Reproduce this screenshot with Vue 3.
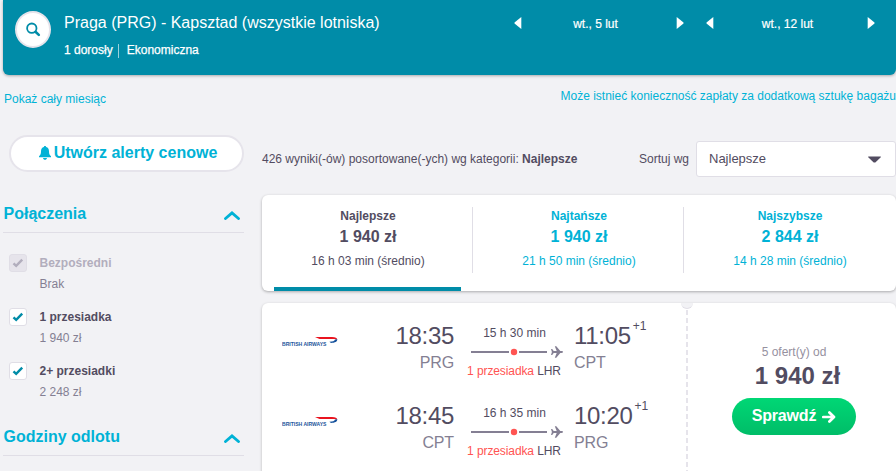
<script setup>
const filters = [
  { name: 'Bezpośredni', note: 'Brak', disabled: true },
  { name: '1 przesiadka', note: '1 940 zł' },
  { name: '2+ przesiadki', note: '2 248 zł' },
]
const tabs = [
  { name: 'Najlepsze', price: '1 940 zł', time: '16 h 03 min (średnio)', active: true },
  { name: 'Najtańsze', price: '1 940 zł', time: '21 h 50 min (średnio)' },
  { name: 'Najszybsze', price: '2 844 zł', time: '14 h 28 min (średnio)' },
]
const legs = [
  { dep: '18:35', from: 'PRG', time: '15 h 30 min', arr: '11:05', to: 'CPT' },
  { dep: '18:45', from: 'CPT', time: '16 h 35 min', arr: '10:20', to: 'PRG' },
]
const days = ['wt., 5 lut', 'wt., 12 lut']
</script>

<template>
  <div class="page">
    <header class="header">
      <button class="search" aria-label="Szukaj">
        <svg width="16" height="16" viewBox="0 0 16 16"><circle cx="6.800" cy="6.200" r="4.700" fill="none" stroke="#008ca8" stroke-width="1.800" /><path d="M10.500 9.800l3.300 3.100" stroke="#008ca8" stroke-width="2.600" stroke-linecap="round" /></svg>
      </button>
      <div class="trip">
        <h1>Praga (PRG) - Kapsztad (wszystkie lotniska)</h1>
        <div class="meta"><span class="adults">1 dorosły</span><i></i><span class="cabin">Ekonomiczna</span></div>
      </div>
      <div class="days">
        <div v-for="d in days" :key="d" class="day">
          <svg width="8" height="12" viewBox="0 0 8 12"><path d="M7.300 0v12L.5 6.600V5.400z" fill="#fff" /></svg>
          <span>{{ d }}</span>
          <svg width="8" height="12" viewBox="0 0 8 12"><path d="M.7 0v12l6.800-5.400V5.400z" fill="#fff" /></svg>
        </div>
      </div>
    </header>
    <div class="links">
      <a class="month">Pokaż cały miesiąc</a>
      <a class="bag">Może istnieć konieczność zapłaty za dodatkową sztukę bagażu</a>
    </div>
    <div class="body">
      <aside>
        <button class="alert">
          <svg width="12" height="14" viewBox="0 0 12 14"><path d="M6 0c.8 0 1.100.5 1.100 1.100C9.100 1.600 10 3.200 10 5.200c0 2.800.5 3.700 2 5.100v.9H0v-.9c1.500-1.400 2-2.300 2-5.100 0-2 .9-3.600 2.900-4.100C4.900.5 5.200 0 6 0zM4 12h4c-.2 1.200-.9 1.800-2 1.800S4.200 13.200 4 12z" fill="#00b2d6" /></svg>
          <span>Utwórz alerty cenowe</span>
        </button>
        <div class="section first">
          <h2>Połączenia</h2>
          <svg width="16" height="9" viewBox="0 0 16 9"><path d="M1.500 7.500L8 2l6.500 5.500" fill="none" stroke="#00b2d6" stroke-width="2.900" stroke-linecap="round" /></svg>
        </div>
        <ul>
          <li v-for="f in filters" :key="f.name" :class="{ disabled: f.disabled }">
            <span class="box"><svg width="12" height="10" viewBox="0 0 12 10"><path d="M1.500 5.300l2.700 2.600L10.200 1.700" fill="none" stroke="currentColor" stroke-width="2.400" /></svg></span>
            <div><b>{{ f.name }}</b><span class="note">{{ f.note }}</span></div>
          </li>
        </ul>
        <div class="section second">
          <h2>Godziny odlotu</h2>
          <svg width="16" height="9" viewBox="0 0 16 9"><path d="M1.500 7.500L8 2l6.500 5.500" fill="none" stroke="#00b2d6" stroke-width="2.900" stroke-linecap="round" /></svg>
        </div>
      </aside>
      <main>
        <div class="sort">
          <p><span class="count">426 wyniki(-ów) posortowane(-ych) wg kategorii: </span><b>Najlepsze</b></p>
          <label>Sortuj wg</label>
          <div class="select"><span>Najlepsze</span><svg width="13" height="7" viewBox="0 0 13 7"><path d="M.2.5h12.600v.8L7.300 6.600H5.700L.2 1.300z" fill="#524c61" /></svg></div>
        </div>
        <div class="tabs">
          <div v-for="t in tabs" :key="t.name" class="tab" :class="{ active: t.active }">
            <b class="name">{{ t.name }}</b>
            <b class="price">{{ t.price }}</b>
            <span class="avg">{{ t.time }}</span>
          </div>
        </div>
        <article class="ticket">
          <div class="legs">
            <div v-for="l in legs" :key="l.dep" class="leg">
              <svg class="logo" width="57" height="12" viewBox="0 0 57 12">
                <text x="0" y="9.600" font-size="6.200" font-weight="bold" textLength="44.500" lengthAdjust="spacingAndGlyphs" fill="#1c559b">BRITISH AIRWAYS</text>
                <path d="M33 1h17c3.500 0 5.300.9 5.200 2.800C53.500 3.100 51 3.100 48 3.100H37.500C36 2.500 34.500 1.700 33 1z" fill="#e9141f" />
                <path d="M55.300 3.200c.2 2.300-2.300 3.600-6.300 3.700l-1.600-1.200c3.500 0 5-.5 5.600-2.200z" fill="#13509b" />
              </svg>
              <div class="end dep"><span class="clock">{{ l.dep }}</span><span class="code">{{ l.from }}</span></div>
              <div class="route">
                <span class="dur">{{ l.time }}</span>
                <svg width="92" height="12" viewBox="0 0 92 12">
                  <path d="M0 6h38M48 6h28" stroke="#847f93" stroke-width="2" />
                  <circle cx="43" cy="6" r="3.200" fill="#ff5452" />
                  <path d="M80 3h1.200l1.500 2.100h3L83.800.2h1.500l4 4.900h1.300c.8 0 1.400.4 1.400.9s-.6.9-1.400.9h-1.300l-4 4.900h-1.500l1.900-4.900h-3L81.200 9H80l.9-3z" fill="#847f93" />
                </svg>
                <span class="stops"><em>1 przesiadka</em> LHR</span>
              </div>
              <div class="end arr"><span class="clock">{{ l.arr }}<sup>+1</sup></span><span class="code">{{ l.to }}</span></div>
            </div>
          </div>
          <div class="tear"><i></i></div>
          <div class="offer">
            <span class="from">5 ofert(y) od</span>
            <b>1 940 zł</b>
            <button><span>Sprawdź</span><svg width="14" height="12" viewBox="0 0 14 12"><path d="M1.300 6h10.500M7.400 1.500L12 6l-4.600 4.500" fill="none" stroke="#fff" stroke-width="2.700" stroke-linecap="round" stroke-linejoin="round" /></svg></button>
          </div>
        </article>
      </main>
    </div>
  </div>
</template>

<style>
body { margin: 0; background: #f2f2f5; overflow: hidden; }
</style>
<style scoped>
* { box-sizing: border-box; }
.page { width: 896px; height: 471px; overflow: hidden; background: #f2f2f5; color: #524c61; font: 12px/16px "Liberation Sans", Arial, sans-serif; white-space: nowrap; }
button { font-family: inherit; border: 0; padding: 0; margin: 0; }
h1, h2, p, ul { margin: 0; padding: 0; }
svg { display: block; flex: none; }
.header { margin-left: 3px; height: 75px; display: flex; background: #008ca8; color: #fff; border-radius: 0 0 6px 6px; box-shadow: 0 1px 3px rgba(0,0,0,.3); }
.search { width: 36px; height: 37px; margin: 11px 0 0 12px; flex: none; border-radius: 50%; background: #fff; border: 2px solid #e6e4eb; display: flex; align-items: center; justify-content: center; }
.trip { margin: 13px 0 0 13px; width: 449.5px; flex: none; }
h1 { font-size: 16px; line-height: 20px; font-weight: 400; }
.meta { display: flex; margin-top: 9px; -webkit-text-stroke: .25px #fff; }
.meta i { width: 1px; height: 14px; margin: 2px 8px 0 5px; background: #99d1dc; }
.days { display: flex; flex: none; gap: 22px; padding-top: 15px; }
.day { width: 170px; height: 16px; display: flex; justify-content: space-between; align-items: center; -webkit-text-stroke: .2px #fff; }
.day span { margin: 2px 6px 0 0; }
.links { display: flex; justify-content: space-between; padding: 13px 0 0 4px; color: #00b2d6; height: 60px; }
.month { padding-top: 3px; }
.body { display: flex; }
aside { width: 241px; margin-left: 3px; flex: none; }
.alert { width: 235px; height: 37px; margin-left: 6px; display: flex; align-items: center; justify-content: center; gap: 3px; padding-left: 3px; border: 2px solid #e6e4eb; border-radius: 19px; background: #fff; color: #00b2d6; font-size: 16px; font-weight: 700; line-height: 20px; }
.alert span { margin-top: -2px; }
.alert svg { margin-top: -1px; }
.section { display: flex; justify-content: space-between; height: 30px; border-bottom: 1px solid #e0dee6; padding: 0 4px 0 .5px; color: #00b2d6; }
.section svg { margin-top: 8px; }
h2 { font-size: 16px; line-height: 20px; margin-top: 1px; }
.first { margin-top: 31px; }
ul { list-style: none; padding: 21px 0 0 6px; height: 193px; }
li { display: flex; height: 54px; }
.box { width: 18px; height: 18px; flex: none; border: 1px solid #e0dee6; border-radius: 3px; background: #fff; color: #008ca8; display: flex; align-items: center; justify-content: center; }
li div { margin: 1px 0 0 12.5px; display: flex; flex-direction: column; gap: 5px; }
.note { color: #847f93; }
.disabled b { color: #b2aebd; }
.disabled .box { background: #e6e4eb; color: #b2aebd; }
main { width: 634px; margin-left: 18px; flex: none; }
.sort { display: flex; height: 36px; margin-top: 6px; align-items: center; }
.sort p { width: 377px; }
.sort label { width: 57px; }
.select { width: 200px; height: 36px; border: 1px solid #e0dee6; border-radius: 3px; background: #fff; padding: 0 14px 0 12px; display: flex; align-items: center; justify-content: space-between; font-size: 13px; }
.tabs { display: flex; height: 96px; margin-top: 18px; background: #fff; border-radius: 6px; box-shadow: 0 1px 3px rgba(0,0,0,.3); padding-top: 12px; }
.tab { position: relative; width: 211px; height: 66px; display: flex; flex-direction: column; align-items: center; padding: 1px 0 0 2px; color: #00b2d6; border-right: 1px solid #e0dee6; }
.tab:last-child { border-color: transparent; }
.active { color: #524c61; }
.active::after { content: ""; position: absolute; left: 12px; top: 80px; width: 187px; height: 4px; background: #008ca8; }
.price { font-size: 16px; line-height: 20px; margin: 3px 0 6px; }
.ticket { display: flex; height: 180px; margin-top: 12px; background: #fff; border-radius: 6px 6px 0 0; box-shadow: 0 1px 3px rgba(0,0,0,.25); }
.legs { width: 423px; padding-top: 18px; }
.leg { display: flex; height: 80px; }
.logo { margin: 15px 0 0 20px; }
.end { display: flex; flex-direction: column; padding-top: 1px; }
.dep { width: 115px; align-items: flex-end; }
.clock { font-size: 24px; line-height: 28px; letter-spacing: -.3px; }
.code { font-size: 16px; line-height: 20px; margin-top: 3px; letter-spacing: -.15px; color: #847f93; }
.route { width: 94px; margin-left: 15px; display: flex; flex-direction: column; align-items: center; }
.dur { margin: 4px 3px 0 0; }
.route svg { margin: 5px 0; margin-left: 2px; }
.stops { letter-spacing: -.1px; margin-right: 4px; }
em { font-style: normal; color: #ff5452; }
.arr { margin-left: 11px; }
sup { font-size: 12px; letter-spacing: 0; vertical-align: 14px; margin-left: 2px; line-height: 0; }
.tear { width: 5px; background: repeating-linear-gradient(#e6e4eb 0 5px, #fff 5px 8px) 1px 7px / 2px 173px no-repeat; }
.tear i { display: block; width: 12px; height: 6px; margin-left: -4px; background: #f2f2f5; border-radius: 0 0 6px 6px; border-bottom: 1px solid #e0dee6; }
.offer { width: 206px; padding: 41px 0 0 2px; display: flex; flex-direction: column; align-items: center; }
.from { color: #96919f; }
.offer b { font-size: 24px; line-height: 28px; margin: 2px 0 0 7px; }
.offer button { width: 124px; height: 37px; margin-top: 8px; border-radius: 19px; background: linear-gradient(#00d775, #00bd68); color: #fff; font-size: 16px; font-weight: 700; display: flex; align-items: center; justify-content: center; gap: 6px; }
.offer button span { margin-top: -2px; letter-spacing: -.2px; }
</style>
